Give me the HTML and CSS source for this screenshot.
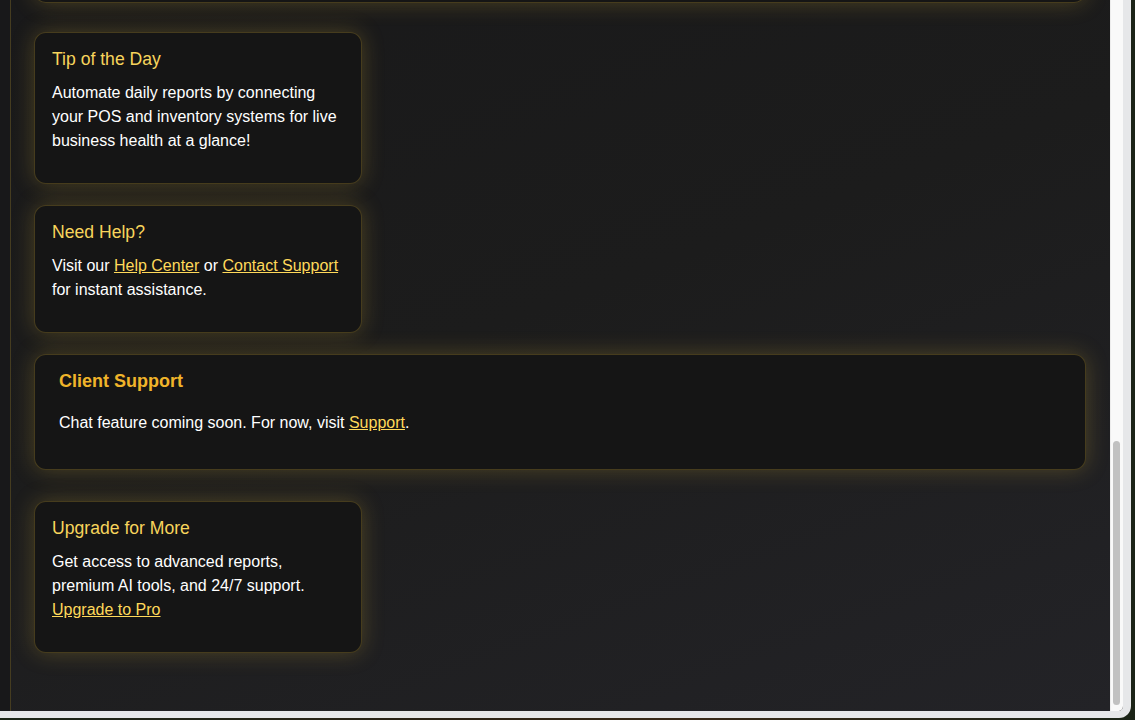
FILE: index.html
```html
<!DOCTYPE html>
<html lang="en">
<head>
<meta charset="utf-8">
<title>Dashboard</title>
<link rel="stylesheet" href="styles.css">
</head>
<body>
<div class="panel">
  <aside class="sidebar"></aside>
  <main class="main" id="main">
    <section class="card wide overview" aria-hidden="true"></section>

    <section class="card small">
      <h3>Tip of the Day</h3>
      <p>Automate daily reports by connecting your POS and inventory systems for live business health at a glance!</p>
    </section>

    <section class="card small">
      <h3>Need Help?</h3>
      <p>Visit our <a href="#">Help Center</a> or <a href="#">Contact Support</a> for instant assistance.</p>
    </section>

    <section class="card wide support">
      <h3 class="wide-title">Client Support</h3>
      <p>Chat feature coming soon. For now, visit <a href="#">Support</a>.</p>
    </section>

    <section class="card small last">
      <h3>Upgrade for More</h3>
      <p>Get access to advanced reports, premium AI tools, and 24/7 support. <a href="#">Upgrade to Pro</a></p>
    </section>
  </main>
  <div class="scrollbar"><div class="thumb"></div></div>
</div>
<script src="script.js"></script>
</body>
</html>
```

FILE: styles.css
```css
html, body {
  margin: 0;
  padding: 0;
  height: 100%;
}

body {
  font-family: "Liberation Sans", Arial, Helvetica, sans-serif;
  background: linear-gradient(90deg, #1c2617 0%, #2a2317 35%, #3a2a18 60%, #1b2417 100%);
  overflow: hidden;
}

.panel {
  box-sizing: border-box;
  width: 1131px;
  height: 718px;
  display: flex;
  border-right: 8px solid #e6e7e9;
  border-bottom: 7px solid #e6e7e9;
  border-bottom-right-radius: 12px;
  overflow: hidden;
  background: #18181a;
}

.sidebar {
  width: 10px;
  flex: 0 0 10px;
  background: #18181a;
  border-right: 1px solid rgba(212, 175, 55, 0.24);
}

.main {
  flex: 1;
  overflow: hidden;
  padding: 24px 24px 58px 23px;
  background: linear-gradient(160deg, #19191a 0%, #1c1c1c 45%, #232327 100%);
}

.scrollbar {
  flex: 0 0 13px;
  width: 13px;
  background: #f9f9f9;
  box-shadow: inset 1px 0 0 #ececec;
  display: flex;
  flex-direction: column;
  justify-content: flex-end;
  align-items: center;
  padding-bottom: 6px;
  box-sizing: border-box;
}

.thumb {
  width: 7px;
  height: 264px;
  border-radius: 4px;
  background: #c1c1c1;
}

.card {
  box-sizing: border-box;
  background: #151515;
  border: 1px solid rgba(212, 175, 55, 0.26);
  border-radius: 12px;
  box-shadow: 0 0 22px rgba(212, 175, 55, 0.27);
  color: #ffffff;
}

.small {
  width: 328px;
  padding: 16px 16px 16px 17px;
  margin-bottom: 21px;
}

.small h3 {
  margin: 0 0 11px;
  font-size: 17.6px;
  font-weight: normal;
  color: #f7d45c;
  line-height: normal;
}

.card p {
  margin: 0 0 14px;
  font-size: 16px;
  line-height: 24px;
  color: #ffffff;
}

.card a {
  color: #ffd95a;
  text-decoration: underline;
}

.wide {
  padding: 16px 24px 18px;
}

.wide-title {
  margin: 0 0 19px;
  font-size: 18px;
  font-weight: bold;
  color: #f0b42a;
  line-height: normal;
}

.wide p {
  margin: 0 0 16px;
}

.overview {
  height: 400px;
  margin-bottom: 29px;
}

.support {
  margin-bottom: 31px;
}

.last {
  margin-bottom: 0;
}
```

FILE: script.js
```js
var main = document.getElementById('main');
main.scrollTop = main.scrollHeight;
```
